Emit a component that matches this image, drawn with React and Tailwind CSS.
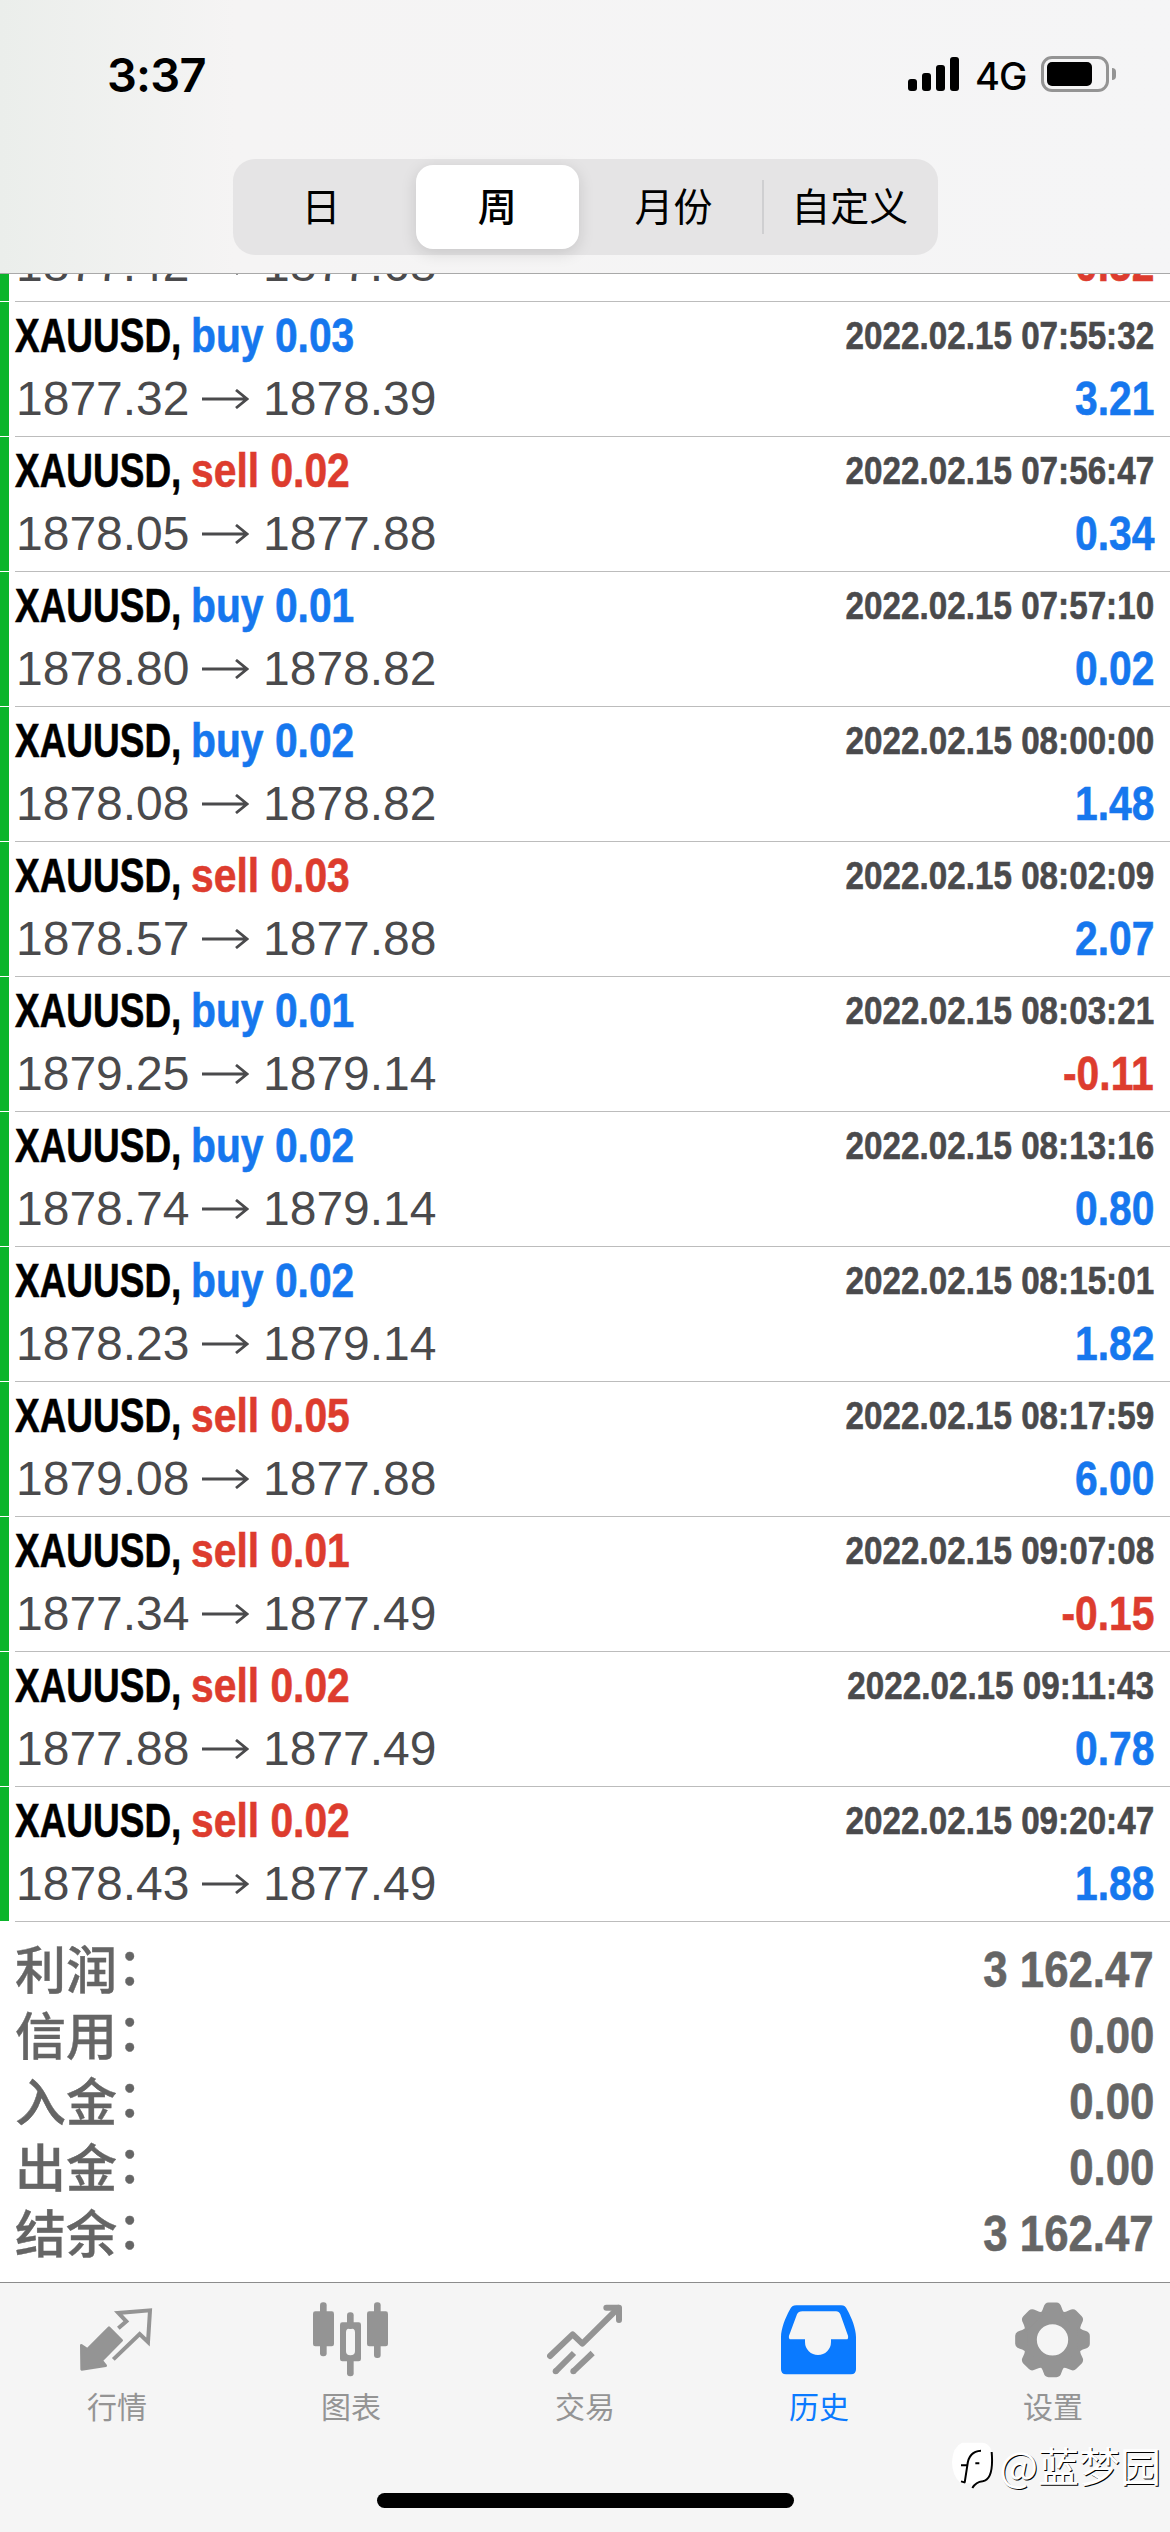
import React, { useState } from "react";

const trades = [
  { side: "buy", lots: "0.03", open: "1877.32", close: "1878.39", time: "2022.02.15 07:55:32", profit: "3.21" },
  { side: "sell", lots: "0.02", open: "1878.05", close: "1877.88", time: "2022.02.15 07:56:47", profit: "0.34" },
  { side: "buy", lots: "0.01", open: "1878.80", close: "1878.82", time: "2022.02.15 07:57:10", profit: "0.02" },
  { side: "buy", lots: "0.02", open: "1878.08", close: "1878.82", time: "2022.02.15 08:00:00", profit: "1.48" },
  { side: "sell", lots: "0.03", open: "1878.57", close: "1877.88", time: "2022.02.15 08:02:09", profit: "2.07" },
  { side: "buy", lots: "0.01", open: "1879.25", close: "1879.14", time: "2022.02.15 08:03:21", profit: "-0.11" },
  { side: "buy", lots: "0.02", open: "1878.74", close: "1879.14", time: "2022.02.15 08:13:16", profit: "0.80" },
  { side: "buy", lots: "0.02", open: "1878.23", close: "1879.14", time: "2022.02.15 08:15:01", profit: "1.82" },
  { side: "sell", lots: "0.05", open: "1879.08", close: "1877.88", time: "2022.02.15 08:17:59", profit: "6.00" },
  { side: "sell", lots: "0.01", open: "1877.34", close: "1877.49", time: "2022.02.15 09:07:08", profit: "-0.15" },
  { side: "sell", lots: "0.02", open: "1877.88", close: "1877.49", time: "2022.02.15 09:11:43", profit: "0.78" },
  { side: "sell", lots: "0.02", open: "1878.43", close: "1877.49", time: "2022.02.15 09:20:47", profit: "1.88" },
];

const summary = [
  { label: "利润", value: "3 162.47" },
  { label: "信用", value: "0.00" },
  { label: "入金", value: "0.00" },
  { label: "出金", value: "0.00" },
  { label: "结余", value: "3 162.47" },
];

const periods = ["日", "周", "月份", "自定义"];

const StatusBar = () => (
  <div className="flex h-[148px] items-center justify-between pl-[107px] pr-[54px]">
    <span className="font-['Inter',sans-serif] text-[47px] font-semibold leading-none tracking-[-0.8px]">3:37</span>
    <div className="flex items-center">
      <div className="flex h-[34px] items-end gap-[5px]">
        <div className="h-3 w-[9px] rounded-[3px] bg-black" />
        <div className="h-[18px] w-[9px] rounded-[3px] bg-black" />
        <div className="h-[26px] w-[9px] rounded-[3px] bg-black" />
        <div className="h-[34px] w-[9px] rounded-[3px] bg-black" />
      </div>
      <span className="ml-[16px] mt-1 w-[66px] font-['Inter',sans-serif] text-[38px] font-medium leading-none tracking-[-1px]">4G</span>
      <div className="h-9 w-[68px] rounded-[11px] border-[3px] border-[#949494] p-[3px]">
        <div className="h-6 w-[45px] rounded-[5px] bg-black" />
      </div>
      <div className="ml-[3px] h-3 w-1 rounded-r-full bg-[#949494]" />
    </div>
  </div>
);

const PriceLine = ({ trade }) => (
  <div className="flex h-[63px] items-center justify-between text-[48px] leading-[63px]">
    <div className="flex items-center pl-px text-[#4a4a4c]">
      <span className="w-[186px]">{trade.open}</span>
      <svg className="mr-[14px] h-5 w-[47px]" viewBox="0 0 47 20" fill="none" stroke="currentColor" strokeWidth="2.8">
        <path d="M0 10H44M34 1L45 10L34 19" />
      </svg>
      <span>{trade.close}</span>
    </div>
    <span
      className={`origin-right scale-x-[0.85] font-bold [-webkit-text-stroke:0.6px] ${
        trade.profit.startsWith("-") ? "text-[#dd3c2e]" : "text-[#1677ee]"
      }`}
    >
      {trade.profit}
    </span>
  </div>
);

const TradeRow = ({ trade }) => (
  <div className="flex h-[135px] shrink-0">
    <div className="mb-px w-[9px] bg-[#0bb52b]" />
    <div className="ml-1.5 flex-1 border-b border-[#bcbcbc] pr-4 pt-[3px]">
      <div className="flex h-[62px] items-center justify-between font-bold [-webkit-text-stroke:0.6px]">
        <div className="flex text-[48px] leading-[62px]">
          <span className="-mr-[40px] w-[216px] origin-left scale-x-[0.77]">XAUUSD,</span>
          <span className={`origin-left scale-x-[0.85] ${trade.side === "buy" ? "text-[#1677ee]" : "text-[#dd3c2e]"}`}>
            {trade.side} {trade.lots}
          </span>
        </div>
        <span className="origin-right scale-x-[0.852] text-[39px] leading-[62px] text-[#4a4a4c]">{trade.time}</span>
      </div>
      <PriceLine trade={trade} />
    </div>
  </div>
);

const QuotesIcon = () => (
  <svg className="h-[76px] w-[76px]" viewBox="0 0 228 228">
    <path
      d="M118 79L142 58L118 33L213 25L207 120L182 96L103 172"
      fill="none"
      stroke="currentColor"
      strokeWidth="12"
    />
    <path
      d="M90 77L128 115L68 176L80 191L8 202L7 130L25 142Z"
      fill="currentColor"
      stroke="currentColor"
      strokeWidth="8"
      strokeLinejoin="round"
    />
  </svg>
);

const ChartIcon = () => (
  <svg className="h-[76px] w-[76px]" viewBox="0 0 228 228" fill="currentColor">
    <rect x="0" y="28" width="63" height="105" rx="7" />
    <rect x="21" y="1" width="20" height="162" rx="9" />
    <rect x="162" y="28" width="63" height="105" rx="7" />
    <rect x="183" y="1" width="20" height="167" rx="9" />
    <rect x="102" y="31" width="20" height="50" rx="9" />
    <rect x="102" y="165" width="20" height="58" rx="9" />
    <path
      fillRule="evenodd"
      d="M88 61H137Q144 61 144 68V171Q144 178 137 178H88Q81 178 81 171V68Q81 61 88 61ZM99 91V148Q99 160 112 160Q126 160 126 148V91Q126 79 112 79Q99 79 99 91Z"
    />
  </svg>
);

const TradeIcon = () => (
  <svg className="h-[76px] w-[76px]" viewBox="0 0 228 228" fill="none" stroke="currentColor" strokeWidth="18">
    <path d="M9 162L77 97L106 125L214 18" strokeLinecap="round" strokeLinejoin="round" />
    <path d="M178 17H216V54" strokeLinecap="round" strokeLinejoin="round" />
    <path d="M26 208L81 153M79 208L137 153" />
    <circle cx="26" cy="208" r="9" fill="currentColor" stroke="none" />
    <circle cx="79" cy="208" r="9" fill="currentColor" stroke="none" />
  </svg>
);

const HistoryIcon = () => (
  <svg className="h-[76px] w-[76px]" viewBox="0 0 228 228" fill="currentColor">
    <path
      fillRule="evenodd"
      d="M46 10H180C190 10 194 14 199 24C212 48 225 80 225 105V202Q225 217 210 217H15Q0 217 0 202V105C0 80 13 48 26 24C31 14 36 10 46 10ZM64 28Q52 28 48 37L24 101Q22 112 30 112H72V120A39 39 0 0 0 150 120V112H196Q203 112 201 101L178 37Q174 28 165 28Z"
    />
  </svg>
);

const SettingsIcon = () => (
  <svg className="h-[76px] w-[76px]" viewBox="0 0 228 228">
    <g transform="translate(112.5 113.5)" fill="currentColor">
      <circle r="67" fill="none" stroke="currentColor" strokeWidth="40" />
      {[0, 45, 90, 135, 180, 225, 270, 315].map((angle) => (
        <path
          key={angle}
          transform={`rotate(${angle})`}
          d="M-44 -74Q-31 -83 -27 -98Q-23 -112 -12 -112H12Q23 -112 27 -98Q31 -83 44 -74Z"
        />
      ))}
    </g>
  </svg>
);

const tabs = [
  { name: "行情", Icon: QuotesIcon },
  { name: "图表", Icon: ChartIcon },
  { name: "交易", Icon: TradeIcon },
  { name: "历史", Icon: HistoryIcon },
  { name: "设置", Icon: SettingsIcon },
];

const App = () => {
  const [period, setPeriod] = useState("周");
  const [tab, setTab] = useState("历史");

  return (
    <div className="relative flex h-[2532px] w-[1170px] flex-col overflow-hidden bg-white font-['Liberation_Sans','Noto_Sans_CJK_SC',sans-serif] text-black">
      {/* Header */}
      <div className="h-[274px] shrink-0 border-b border-[#a9a9a9] bg-linear-to-r from-[#ebeeeb] via-[#f5f4f4] via-20% to-[#f5f5f6]">
        <StatusBar />
        <div className="ml-[233px] mt-[11px] flex h-24 w-[705px] rounded-[22px] bg-[#e5e4e5] py-1.5">
          {periods.map((item, index) => (
            <div key={item} className="flex flex-1 items-center">
              <button
                onClick={() => setPeriod(item)}
                className={`h-[84px] flex-1 text-[39px] leading-none ${
                  period === item ? "mx-[7px] rounded-[17px] bg-white font-medium shadow-[0_4px_16px_rgba(0,0,0,0.13)]" : ""
                }`}
              >
                {item}
              </button>
              {index === 2 && <div className="-mr-0.5 h-[54px] w-0.5 bg-[#cfcfd1]" />}
            </div>
          ))}
        </div>
      </div>

      {/* Row scrolled half under the header */}
      <div className="flex h-7 shrink-0 overflow-hidden">
        <div className="mb-px w-[9px] bg-[#0bb52b]" />
        <div className="ml-1.5 flex flex-1 flex-col justify-end border-b border-[#bcbcbc] pb-[5px] pr-4">
          <PriceLine trade={{ open: "1877.42", close: "1877.68", profit: "-0.52" }} />
        </div>
      </div>
      {trades.map((trade) => (
        <TradeRow key={trade.time} trade={trade} />
      ))}

      {/* Totals */}
      <div className="h-[360px] shrink-0 pl-[15px] pr-4 pt-[15px] text-[50px] text-[#656565]">
        {summary.map((item) => (
          <div key={item.label} className="flex h-[66px] items-center justify-between leading-[66px]">
            <div className="-mt-1.5 flex font-['Noto_Sans_CJK_SC',sans-serif] text-[51px] font-medium leading-[60px] [-webkit-text-stroke:0.4px]">
              <span>{item.label}</span>
              <span className="-mt-1">：</span>
            </div>
            <span className="origin-right scale-x-[0.875] font-bold [-webkit-text-stroke:0.6px]">{item.value}</span>
          </div>
        ))}
      </div>

      {/* Bottom tabs */}
      <div className="flex flex-1 flex-col items-center border-t border-[#8c8c8c] bg-[#f5f5f5]">
        <div className="flex w-full">
          {tabs.map(({ name, Icon }) => (
            <button
              key={name}
              onClick={() => setTab(name)}
              className={`flex w-[234px] flex-col items-center pt-[19px] ${tab === name ? "text-[#0a7aff]" : "text-[#949494]"}`}
            >
              <Icon />
              <span className="mt-[5px] font-['Noto_Sans_CJK_SC',sans-serif] text-[30px] leading-[44px]">{name}</span>
            </button>
          ))}
        </div>
        <div className="mt-[66px] h-[15px] w-[417px] rounded-full bg-black" />
      </div>

      {/* Watermark */}
      <div className="absolute bottom-[42px] right-[9px] flex items-center text-white">
        <svg className="mr-[5px] mt-1 h-[48px] w-[42px]" viewBox="0 0 126 144">
          <path d="M30 2H92Q122 6 122 52Q122 112 94 122Q70 122 60 140L56 124H26Q0 100 0 60Q2 14 30 2Z" fill="#fff" />
          <path
            d="M27 70H46Q50 28 87 26M46 70L38 122M27 118L40 122M70 64H82M119 30Q126 112 92 118Q72 120 61 138"
            fill="none"
            stroke="#000"
            strokeWidth="6"
          />
        </svg>
        <span className="font-['Noto_Sans_CJK_SC',sans-serif] text-[41px] leading-none [text-shadow:1px_1px_0_#000]">@蓝梦园</span>
      </div>
    </div>
  );
};

export default App;
